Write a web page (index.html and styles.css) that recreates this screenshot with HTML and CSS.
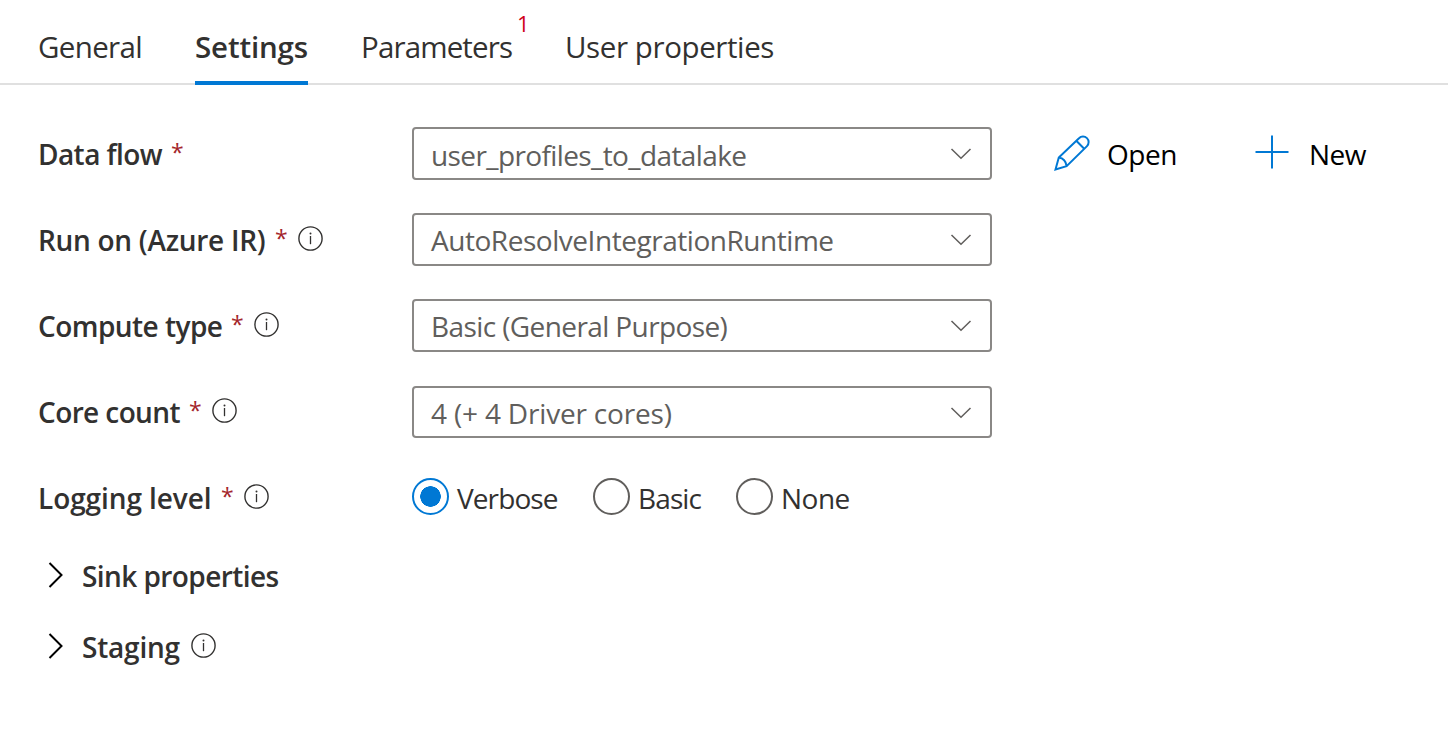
FILE: index.html
```html
<!DOCTYPE html>
<html lang="en">
<head>
<meta charset="utf-8">
<title>Data flow settings</title>
<link rel="stylesheet" href="styles.css">
</head>
<body>
<svg class="defs" width="0" height="0">
  <symbol id="info" viewBox="0 0 25 25"><circle cx="12.5" cy="12.5" r="11.6" fill="none" stroke="currentColor" stroke-width="1.4"/><path d="M12.5 10v8.2" stroke="currentColor" stroke-width="1.3"/><circle cx="12.5" cy="7.4" r="1" fill="currentColor"/></symbol>
  <symbol id="down" viewBox="0 0 22 12"><path d="M1.500 1l9.500 9.300L20.500 1" fill="none" stroke="currentColor" stroke-width="1.5"/></symbol>
  <symbol id="right" viewBox="0 0 16 26"><path d="M1.500 1l12 12-12 12" fill="none" stroke="currentColor" stroke-width="2"/></symbol>
</svg>
<nav class="tabs">
  <a class="tab general">General</a>
  <a class="tab settings active">Settings</a>
  <a class="tab parameters">Parameters<sup class="badge">1</sup></a>
  <a class="tab user">User properties</a>
</nav>
<main class="form">
  <div class="row">
    <div class="label"><span class="data-flow">Data flow</span><span class="required">*</span></div>
    <div class="select"><span class="profiles">user_profiles_to_datalake</span><svg class="down"><use href="#down"/></svg></div>
    <button class="action open"><svg class="pencil" viewBox="0 0 36 36"><path d="M1.500 34.500l3.300-11.900L25 3.200a5.500 5.500 0 0 1 8 7.900L12.600 31.200zM22.300 5.800l7.900 7.900M4.800 22.600c4.200.7 7.200 4 7.800 8.600" fill="none" stroke="currentColor" stroke-width="2"/></svg><span>Open</span></button>
    <button class="action new"><svg class="plus" viewBox="0 0 34 34"><path d="M17 .5v33M.5 17h33" stroke="currentColor" stroke-width="2"/></svg><span>New</span></button>
  </div>
  <div class="row">
    <div class="label"><span class="run-on">Run on (Azure IR)</span><span class="required">*</span><svg class="info"><use href="#info"/></svg></div>
    <div class="select"><span class="runtime">AutoResolveIntegrationRuntime</span><svg class="down"><use href="#down"/></svg></div>
  </div>
  <div class="row">
    <div class="label"><span class="compute">Compute type</span><span class="required">*</span><svg class="info"><use href="#info"/></svg></div>
    <div class="select"><span class="purpose">Basic (General Purpose)</span><svg class="down"><use href="#down"/></svg></div>
  </div>
  <div class="row">
    <div class="label"><span class="core">Core count</span><span class="required">*</span><svg class="info"><use href="#info"/></svg></div>
    <div class="select short"><span class="cores">4 (+ 4 Driver cores)</span><svg class="down"><use href="#down"/></svg></div>
  </div>
  <div class="row last">
    <div class="label"><span class="logging">Logging level</span><span class="required">*</span><svg class="info"><use href="#info"/></svg></div>
    <div class="radios">
      <label class="radio verbose checked"><i class="ring"></i>Verbose</label>
      <label class="radio basic"><i class="ring"></i>Basic</label>
      <label class="radio none"><i class="ring"></i>None</label>
    </div>
  </div>
  <div class="section"><svg class="right"><use href="#right"/></svg><span class="sink">Sink properties</span></div>
  <div class="section"><svg class="right"><use href="#right"/></svg><span class="staging">Staging</span><svg class="info"><use href="#info"/></svg></div>
</main>
</body>
</html>
```
FILE: styles.css
```css
* { box-sizing: border-box; }
body { margin: 0; background: #fff; color: #323130; font-family: "Open Sans", sans-serif; font-size: 28px; line-height: 40px; white-space: nowrap; }
svg { flex: none; }
.defs { position: absolute; }

/* Tab strip */
.tabs { display: flex; height: 85px; padding-left: 38px; border-bottom: 2px solid #e0e0e0; font-size: 29.500px; }
.tab { position: relative; flex: none; height: 85px; padding-top: 27px; }
.general { width: 157px; letter-spacing: -0.65px; }
.settings { width: 113px; margin-right: 53px; letter-spacing: -0.150px; }
.parameters { width: 204px; letter-spacing: -0.850px; }
.user { letter-spacing: -0.400px; }
.active { border-bottom: 4px solid #0078d4; font-weight: 600; }
.badge { position: absolute; left: 156px; top: 8px; font-size: 22px; line-height: 30px; color: #d0001a; }

/* Form rows */
.form { padding: 42px 0 0 38px; }
.row { display: flex; height: 86px; align-items: flex-start; }
.last { height: 69px; }
.label { display: flex; flex: none; width: 374px; height: 53px; align-items: center; font-weight: 600; }
.data-flow { width: 124px; letter-spacing: -0.570px; }
.run-on { width: 228px; letter-spacing: -0.290px; }
.compute { width: 184px; letter-spacing: -0.540px; }
.core { width: 142px; letter-spacing: -0.600px; }
.logging { width: 174px; letter-spacing: -0.080px; }
.required { width: 12px; margin: -3px 0 0 9px; font-size: 23px; font-weight: 400; color: #a4262c; }
.info { width: 25px; height: 25px; margin: -3px 0 0 11px; }
.select { display: flex; flex: none; width: 580px; height: 53px; align-items: center; justify-content: space-between; padding: 1px 18px 0 17px; border: 2px solid #8a8886; border-radius: 4px; color: #605e5c; }
.short { height: 52px; margin-top: 1px; }
.profiles { padding-top: 1px; letter-spacing: -0.610px; }
.runtime { letter-spacing: -0.460px; }
.purpose { letter-spacing: -0.600px; }
.cores { letter-spacing: -0.180px; }
.down { width: 22px; height: 12px; }

/* Row actions */
.action { display: flex; flex: none; height: 53px; align-items: center; padding: 0; border: 0; background: none; font: inherit; letter-spacing: -0.500px; color: #000; }
.action svg { color: #0078d4; }
.open { width: 201px; margin-left: 62px; }
.pencil { width: 36px; height: 36px; margin: -2px 17px 0 0; }
.plus { width: 34px; height: 34px; margin: -3px 20px 0 0; }

/* Logging level choices */
.radios { display: flex; height: 53px; align-items: center; }
.radio { display: flex; flex: none; align-items: center; }
.verbose { width: 181px; letter-spacing: -0.900px; }
.basic { width: 143px; letter-spacing: -0.880px; }
.none { letter-spacing: -0.500px; }
.ring { width: 37px; height: 37px; margin: -2px 8px 0 0; border: 2px solid #605e5c; border-radius: 50%; }
.checked .ring { border-color: #0078d4; background: radial-gradient(circle, #0078d4 10px, transparent 10.5px); }

/* Collapsed sections */
.section { display: flex; height: 71px; align-items: center; padding-left: 10px; font-weight: 600; }
.right { width: 16px; height: 26px; margin: -1px 18px 0 0; color: #000; }
.sink { letter-spacing: -0.570px; }
.staging { width: 98px; letter-spacing: -0.200px; }
```
